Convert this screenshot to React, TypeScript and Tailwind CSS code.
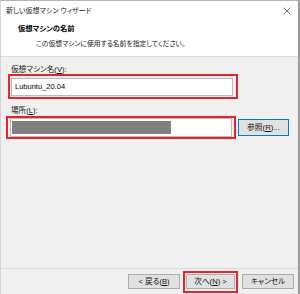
import React from "react";

const jp = "font-['Liberation_Sans','Noto_Sans_CJK_JP',sans-serif] [font-feature-settings:'palt']";

function Btn({ children, className = "" }: { children: React.ReactNode; className?: string }) {
  return (
    <div
      className={
        "flex h-[15px] items-center justify-center border border-[#adadad] bg-[#e1e1e1] text-[7.6px] leading-none text-[#111] " +
        className
      }
    >
      {children}
    </div>
  );
}

export default function App() {
  return (
    <div className={"flex h-[294px] w-[300px] flex-col overflow-hidden border-l border-t border-r-2 border-l-[#d4d4d4] border-t-[#b4b4b4] border-r-[#9a9a9a] bg-[#f0f0f0] " + jp}>
      {/* title bar */}
      <div className="flex h-[19px] shrink-0 items-center justify-between bg-white pl-[5px] pr-[6px]">
        <span className="text-[7px] leading-none text-[#1a1a1a]">新しい仮想マシン ウィザード</span>
        <svg width="8" height="8" viewBox="0 0 8 8" className="mr-[1px]">
          <path d="M0.5 0.5 L7.5 7.5 M7.5 0.5 L0.5 7.5" stroke="#6b6b6b" strokeWidth="0.9" />
        </svg>
      </div>
      {/* header */}
      <div className="flex h-[37px] shrink-0 flex-col border-b border-[#dcdcdc] bg-white pl-[17px] pt-[4px]">
        <div className="text-[7.3px] font-bold leading-[10px] text-black">仮想マシンの名前</div>
        <div className="mt-[5px] pl-[18px] text-[6.8px] leading-[10px] text-[#1a1a1a]">
          この仮想マシンに使用する名前を指定してください。
        </div>
      </div>
      {/* body */}
      <div className="flex flex-1 flex-col pl-[5px] pt-[9px]">
        <div className="ml-[5px] text-[7.6px] leading-[8px] text-[#111]">
          仮想マシン名(<span className="underline">V</span>):
        </div>
        <div className="ml-[2px] flex h-[25px] w-[230px] border-2 border-[#e8232d] pb-[1px] pl-[1px] pr-[3px] pt-[2px]">
          <div className="flex flex-1 items-center border border-[#b9b9b9] bg-white pl-[3px] text-[7.5px] text-black">
            Lubuntu_20.04
          </div>
        </div>
        <div className="ml-[5px] mt-[8px] text-[7.6px] leading-[8px] text-[#111]">
          場所(<span className="underline">L</span>):
        </div>
        <div className="mt-[1px] flex items-center">
          <div className="flex h-[23px] w-[230px] border-2 border-[#e8232d] px-[2px] py-[0px]">
            <div className="flex flex-1 items-center border border-[#b9b9b9] bg-white px-[1px]">
              <div className="h-[13px] w-[159px] bg-[#808080]" />
            </div>
          </div>
          <div className="ml-[2px] flex h-[17px] w-[51px] items-center justify-center border border-[#0078d7] bg-[#e1e1e1] text-[7.8px] leading-none text-[#111]">
            参照(<span className="underline">R</span>)...
          </div>
        </div>
      </div>
      {/* footer */}
      <div className="flex h-[26px] shrink-0 items-center justify-end gap-[3px] border-t border-[#dadada] pr-[4px]">
        <Btn className="w-[52px]">
          &lt; 戻る(<span className="underline">B</span>)
        </Btn>
        <div className="flex h-[22px] w-[55px] items-center justify-center border-2 border-[#e8232d] px-[1px]">
          <Btn className="w-full">
            次へ(<span className="underline">N</span>) &gt;
          </Btn>
        </div>
        <Btn className="ml-[1px] w-[52px]">キャンセル</Btn>
      </div>
    </div>
  );
}
